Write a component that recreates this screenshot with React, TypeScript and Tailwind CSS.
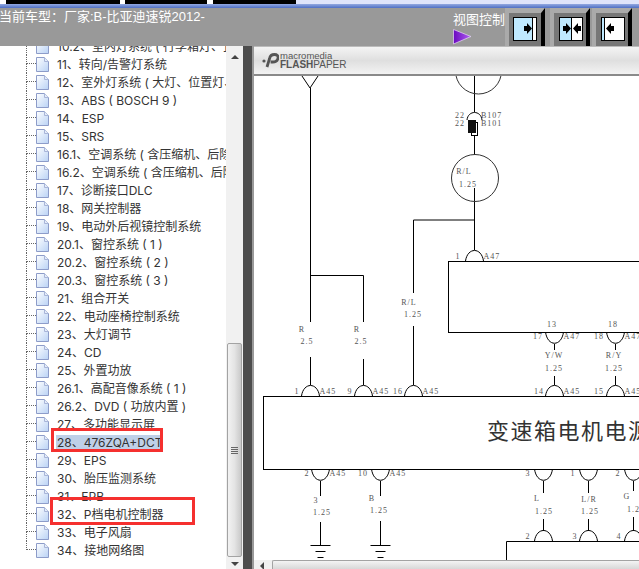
import type { ReactNode } from 'react'

const rows = [
  '10.2、室内灯系统 ( 行李箱灯、顶',
  '11、转向/告警灯系统',
  '12、室外灯系统 ( 大灯、位置灯、雾灯 )',
  '13、ABS ( BOSCH 9 )',
  '14、ESP',
  '15、SRS',
  '16.1、空调系统 ( 含压缩机、后除霜 )',
  '16.2、空调系统 ( 含压缩机、后除霜 )',
  '17、诊断接口DLC',
  '18、网关控制器',
  '19、电动外后视镜控制系统',
  '20.1、窗控系统 ( 1 )',
  '20.2、窗控系统 ( 2 )',
  '20.3、窗控系统 ( 3 )',
  '21、组合开关',
  '22、电动座椅控制系统',
  '23、大灯调节',
  '24、CD',
  '25、外置功放',
  '26.1、高配音像系统 ( 1 )',
  '26.2、DVD ( 功放内置 )',
  '27、多功能显示屏',
  '28、476ZQA+DCT',
  '29、EPS',
  '30、胎压监测系统',
  '31、EPB',
  '32、P档电机控制器',
  '33、电子风扇',
  '34、接地网络图',
]

function DocIcon() {
  return (
    <svg width="13" height="15" viewBox="0 0 13 15" className="shrink-0">
      <defs>
        <linearGradient id="doc" x1="0" y1="0" x2="1" y2="1">
          <stop offset="0" stopColor="#ffffff" />
          <stop offset="1" stopColor="#b9d2f5" />
        </linearGradient>
      </defs>
      <path d="M0.5 0.5H8.5L12.5 4.5V14.5H0.5Z" fill="url(#doc)" stroke="#8d9cc9" />
      <path d="M8.5 0.5V4.5H12.5" fill="#e4ecfa" stroke="#a8b5d8" />
    </svg>
  )
}

function TreeRow({ label, last, selected }: { label: string; last: boolean; selected: boolean }) {
  return (
    <div className="flex h-[18px] items-center">
      <div className="ml-[26px] flex h-full w-[10px] shrink-0 flex-col">
        <div className="h-[9px] border-b border-l border-dotted border-[#666]" />
        {!last && <div className="flex-1 border-l border-dotted border-[#666]" />}
      </div>
      <DocIcon />
      <span
        className={
          'ml-[7px] whitespace-nowrap px-px text-[12px] leading-[15px] text-[#333] ' +
          (selected ? 'bg-[#bfd0e8]' : '')
        }
      >
        {label}
      </span>
    </div>
  )
}

function Tree() {
  return (
    <div className="relative h-full w-[226px] shrink-0 overflow-hidden bg-white">
      <div className="-mt-[9px]">
        {rows.map((r, i) => (
          <TreeRow key={r} label={r} last={i === rows.length - 1} selected={r.startsWith('28')} />
        ))}
      </div>
      <div className="absolute left-[51px] top-[382px] h-[24px] w-[112px] border-[3px] border-[#f5302f]" />
      <div className="absolute left-[50px] top-[451px] h-[28px] w-[145px] border-[3px] border-[#f5302f]" />
    </div>
  )
}

function TreeScrollbar() {
  return (
    <div className="flex h-full w-[17px] shrink-0 flex-col items-center bg-[#f1f1f1]">
      <div className="mt-[9px] h-0 w-0 border-x-[4px] border-b-[4px] border-x-transparent border-b-[#444]" />
      <div className="mt-[284px] flex h-[214px] w-[15px] items-center justify-center rounded-[2px] border border-[#a3a3a3] bg-linear-to-r from-[#f2f2f2] via-[#e4e4e4] to-[#c9c9c9]">
        <div className="flex w-[7px] flex-col gap-px">
          <div className="h-px bg-[#666]" />
          <div className="h-px bg-[#666]" />
          <div className="h-px bg-[#666]" />
          <div className="h-px bg-[#666]" />
        </div>
      </div>
      <div className="mt-[5px] h-0 w-0 border-x-[4px] border-t-[4px] border-x-transparent border-t-[#444]" />
    </div>
  )
}

function ViewButton({ children }: { children: ReactNode }) {
  return (
    <svg width="40" height="38" viewBox="0 0 40 38" className="shrink-0">
      <rect width="40" height="38" fill="#aaaaaa" />
      <rect x="4" y="5" width="32" height="33" fill="#777777" />
      <path d="M36 5L40 0V38H36Z" fill="#000000" />
      {children}
    </svg>
  )
}

const rightArrow = (x: number) => `M${x} 18H${x + 3}V15L${x + 8} 20.5L${x + 3} 26V23H${x}Z`
const leftArrow = (x: number) => `M${x + 8} 18H${x + 5}V15L${x} 20.5L${x + 5} 26V23H${x + 8}Z`

function Header() {
  return (
    <div className="flex h-[38px] shrink-0 bg-[#999999] text-white">
      <div className="-ml-px flex-1 pt-[1px] text-[13px] leading-[16px] whitespace-nowrap">
        当前车型：厂家:B-比亚迪速锐2012-
      </div>
      <div className="w-[52px] shrink-0 pt-[4px]">
        <div className="text-[13px] leading-[16px] whitespace-nowrap">视图控制</div>
        <svg width="19" height="16" viewBox="0 0 19 16" className="mt-[1px] block">
          <defs>
            <linearGradient id="tri" x1="0" y1="0" x2="1" y2="0">
              <stop offset="0" stopColor="#6a08c0" />
              <stop offset="1" stopColor="#b060f0" />
            </linearGradient>
          </defs>
          <path d="M0.5 0.5L18 7.5L0.5 15Z" fill="url(#tri)" stroke="#e8d8f8" strokeWidth="0.7" />
        </svg>
      </div>
      <ViewButton>
        <rect x="8.5" y="9.5" width="23" height="23" fill="#bfe9ff" stroke="#000" />
        <rect x="28" y="10" width="3" height="22" fill="#fff" />
        <rect x="27" y="10" width="1" height="22" fill="#000" />
        <path d={rightArrow(19)} fill="#000" />
      </ViewButton>
      <div className="ml-[5px] flex">
        <ViewButton>
          <rect x="9.5" y="9.5" width="23" height="23" fill="#fff" stroke="#000" />
          <rect x="10" y="10" width="11" height="22" fill="#bfe9ff" />
          <rect x="21" y="10" width="1" height="22" fill="#000" />
          <path d={rightArrow(13)} fill="#000" />
          <path d={leftArrow(23)} fill="#000" />
        </ViewButton>
      </div>
      <div className="ml-[2px] mr-[7px] flex">
        <ViewButton>
          <rect x="9.5" y="9.5" width="23" height="23" fill="#fff" stroke="#000" />
          <rect x="10" y="10" width="2" height="22" fill="#bfe9ff" />
          <rect x="12" y="10" width="1" height="22" fill="#000" />
          <path d={leftArrow(14)} fill="#000" />
        </ViewButton>
      </div>
    </div>
  )
}

function FlashPaperBar() {
  return (
    <div className="flex h-[30px] shrink-0 items-center border-b-2 border-b-[#8a8a8a] border-t border-t-[#bbbbbb] bg-linear-to-b from-[#f4f4f4] via-[#dfdfdf] to-[#f3f3f3] pl-[8px] text-[#555]">
      <svg width="17" height="15" viewBox="0 0 17 15" className="shrink-0">
        <circle cx="2" cy="8" r="1.6" fill="#555" />
        <path
          d="M5 14L7.6 5.5C8 3 10 1.5 12.5 1.5C15 1.5 16.5 3 16 5.2C15.4 7.6 13.4 9 10.8 9H8.6"
          fill="none"
          stroke="#555"
          strokeWidth="2.8"
        />
      </svg>
      <div className="ml-[1px] flex flex-col font-['Liberation_Sans',sans-serif]">
        <span className="text-[9.5px] leading-[9px]">macromedia</span>
        <span className="text-[10px] leading-[10px]">
          <span className="font-bold">FLASH</span>PAPER
        </span>
      </div>
    </div>
  )
}

// small label in the schematic, coordinates are page pixels
function L({ x, y, t, a = 'middle' }: { x: number; y: number; t: string; a?: 'start' | 'middle' | 'end' }) {
  return (
    <text x={x} y={y + 3} textAnchor={a} fontSize="8" letterSpacing="1" fill="#555">
      {t}
    </text>
  )
}

function Pin({ x, up, y, left, leftX, right }: { x: number; up: boolean; y: number; left: string; leftX: number; right?: string }) {
  const d = up ? `M${x - 9} ${y}C${x - 7} ${y - 14} ${x + 7} ${y - 14} ${x + 9} ${y}` : `M${x - 9} ${y}C${x - 7} ${y + 15} ${x + 7} ${y + 15} ${x + 9} ${y}`
  const ty = up ? y - 5 : y + 4
  return (
    <>
      <path d={d} fill="none" stroke="#000" strokeWidth="1" />
      <L x={leftX} y={ty} t={left} />
      {right && <L x={x + 9} y={ty} t={right} a="start" />}
    </>
  )
}

function Ground({ x }: { x: number }) {
  return <path d={`M${x - 10} 545.5H${x + 10}M${x - 5} 551.5H${x + 5}M${x - 3} 557.5H${x + 3}`} stroke="#000" fill="none" />
}

function Schematic() {
  return (
    <svg
      viewBox="254 76 385 484"
      className="block h-[484px] w-[385px] font-['Liberation_Serif',serif]"
    >
      <path
        d="M302 76L310 88L318 76M310.5 88V322M310.5 275.5H363.5V322M310.5 357V385M363.5 359V385M413.5 293V220H474.5M413.5 326V385
           M474.5 76V112M474.5 136V155M474.5 188V250M554.5 344V350M554.5 376V385M615.5 344V350M615.5 376V385
           M320.5 481V496M320.5 522V545M380.5 481V496M380.5 521V545M543.5 481V493M543.5 519V531M588.5 481V493M588.5 519V531M633.5 481V491M633.5 517V531"
        fill="none"
        stroke="#000"
      />
      <circle cx="478.5" cy="71" r="23" fill="none" stroke="#333" />
      <circle cx="475" cy="178" r="23.5" fill="none" stroke="#333" />
      <path d="M467 120C468 110 481 110 482 120" fill="none" stroke="#000" />
      <rect x="471.5" y="122.5" width="6" height="13" fill="#fff" stroke="#000" />
      <rect x="468" y="120" width="8" height="13" fill="#111" />
      <L x={460} y={115} t="22" />
      <L x={481} y={115} t="B107" a="start" />
      <L x={460} y={123} t="22" />
      <L x={481} y={123} t="B101" a="start" />
      <L x={464} y={171} t="R/L" />
      <L x={468} y={184} t="1.25" />
      <L x={409} y={302} t="R/L" />
      <L x={413} y={314} t="1.25" />
      <L x={302} y={329} t="R" />
      <L x={357} y={329} t="R" />
      <L x={307} y={341} t="2.5" />
      <L x={361} y={341} t="2.5" />

      <rect x="448.5" y="261.5" width="220" height="71" fill="none" stroke="#000" />
      <Pin x={474.5} up y={261} left="1" leftX={458} right="A47" />
      <L x={552} y={324} t="13" />
      <L x={613} y={324} t="18" />
      <Pin x={554.5} up={false} y={332} left="17" leftX={538} right="A47" />
      <Pin x={615.5} up={false} y={332} left="18" leftX={599} right="A47" />
      <L x={554} y={355} t="Y/W" />
      <L x={554} y={368} t="1.25" />
      <L x={614} y={355} t="R/Y" />
      <L x={614} y={368} t="1.25" />

      <rect x="263.5" y="396.5" width="420" height="73" fill="none" stroke="#000" />
      <Pin x={310.5} up y={396} left="1" leftX={297} right="A45" />
      <Pin x={363.5} up y={396} left="9" leftX={350} right="A45" />
      <Pin x={413.5} up y={396} left="16" leftX={398} right="A45" />
      <Pin x={554.5} up y={396} left="14" leftX={539} right="A45" />
      <Pin x={615.5} up y={396} left="15" leftX={599} right="A45" />
      <text
        x="487"
        y="439"
        fontSize="22"
        letterSpacing="1.5"
        fill="#333"
        fontFamily="'Noto Sans CJK SC', sans-serif"
      >
        变速箱电机电源
      </text>

      <Pin x={320.5} up={false} y={469} left="2" leftX={307} right="A45" />
      <Pin x={380.5} up={false} y={469} left="10" leftX={363} right="A45" />
      <Pin x={543.5} up={false} y={469} left="3" leftX={528} />
      <Pin x={588.5} up={false} y={469} left="1" leftX={573} />
      <Pin x={633.5} up={false} y={469} left="2" leftX={618} />
      <L x={316} y={500} t="3" />
      <L x={322} y={512} t="1.25" />
      <L x={372} y={498} t="B" />
      <L x={379} y={510} t="1.25" />
      <L x={537} y={498} t="L" />
      <L x={544} y={511} t="1.25" />
      <L x={589} y={499} t="L/R" />
      <L x={590} y={511} t="1.25" />
      <L x={627} y={496} t="G" />
      <L x={636} y={509} t="1.25" />
      <Ground x={320.5} />
      <Ground x={380.5} />

      <path d="M506.5 560V541.5H680" fill="none" stroke="#000" />
      <Pin x={543.5} up y={541} left="2" leftX={528} />
      <Pin x={588.5} up y={541} left="3" leftX={575} />
      <Pin x={633.5} up y={541} left="4" leftX={619} />
    </svg>
  )
}

export default function App() {
  return (
    <div className="flex h-[569px] w-[639px] flex-col overflow-hidden bg-white font-['Liberation_Sans','Noto_Sans_CJK_SC',sans-serif]">
      <div className="flex h-[4px] shrink-0 bg-[#dfe4fa]">
        <div className="w-[6px] bg-white" />
        <div className="w-[114px] bg-black" />
        <div className="w-[5px] bg-white" />
        <div className="w-[82px] bg-black" />
        <div className="w-[6px] bg-white" />
        <div className="w-[83px] bg-black" />
      </div>
      <div className="h-[4px] shrink-0 bg-linear-to-b from-[#93a8e0] to-[#4f6fc4]" />
      <Header />
      <div className="flex min-h-0 flex-1 font-['Inter','Noto_Sans_CJK_SC',sans-serif]">
        <Tree />
        <TreeScrollbar />
        <div className="w-[9px] shrink-0 bg-[#4d4d4d]" />
        <div className="w-[2px] shrink-0 bg-[#9a9a9a]" />
        <div className="flex min-w-0 flex-1 flex-col bg-white">
          <FlashPaperBar />
          <Schematic />
          <div className="flex h-[9px] shrink-0 items-start bg-[#f0f0f0]">
            <div className="ml-[6px] mt-[2px] h-0 w-0 border-y-[4px] border-r-[4px] border-y-transparent border-r-[#444]" />
            <div className="ml-[8px] h-full flex-1 rounded-tl-[2px] border-l border-t border-[#a3a3a3] bg-linear-to-b from-[#f4f4f4] to-[#d8d8d8]" />
          </div>
        </div>
      </div>
    </div>
  )
}
